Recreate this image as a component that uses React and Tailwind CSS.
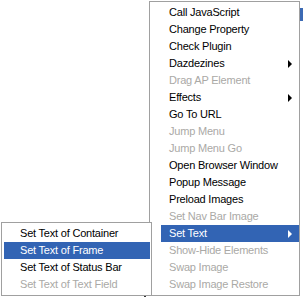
import React from "react";

const mainItems = [
  { label: "Call JavaScript" },
  { label: "Change Property" },
  { label: "Check Plugin" },
  { label: "Dazdezines", sub: true },
  { label: "Drag AP Element", disabled: true },
  { label: "Effects", sub: true },
  { label: "Go To URL" },
  { label: "Jump Menu", disabled: true },
  { label: "Jump Menu Go", disabled: true },
  { label: "Open Browser Window" },
  { label: "Popup Message" },
  { label: "Preload Images" },
  { label: "Set Nav Bar Image", disabled: true },
  { label: "Set Text", sub: true, active: true },
  { label: "Show-Hide Elements", disabled: true },
  { label: "Swap Image", disabled: true },
  { label: "Swap Image Restore", disabled: true },
];

const subItems = [
  { label: "Set Text of Container" },
  { label: "Set Text of Frame", active: true },
  { label: "Set Text of Status Bar" },
  { label: "Set Text of Text Field", disabled: true },
];

function Arrow({ active }) {
  return (
    <span
      className={
        "w-0 h-0 border-y-[4px] border-y-transparent border-l-[4px] " +
        (active ? "border-l-white" : "border-l-black")
      }
    />
  );
}

function Item({ item, indent }) {
  const color = item.active
    ? "bg-[#3264b4] text-white"
    : item.disabled
    ? "text-[#aaa9a6]"
    : "text-black";
  return (
    <div className={`flex h-[17px] items-center justify-between pr-[7px] ${indent} ${color}`}>
      <span className="whitespace-nowrap leading-none tracking-[-0.2px]">{item.label}</span>
      {item.sub && <Arrow active={item.active} />}
    </div>
  );
}

export default function App() {
  return (
    <div
      className="relative w-[303px] h-[297px] bg-white overflow-hidden text-[11px]"
      style={{ fontFamily: '"Liberation Sans", Arial, sans-serif' }}
    >
      {/* bits of the page behind the menus */}
      <div className="absolute left-[300px] top-[8px] w-[3px] h-[13px] bg-[#3c6ab4]" />
      <div className="absolute left-[144px] top-[294px] w-[2px] h-[3px] bg-[#333]" />

      <div className="absolute left-[149px] top-[1px] w-[151px] border border-[#a0a0a0] bg-white pt-[2px] pb-[2px] pl-[11px]">
        {mainItems.map((item) => (
          <Item key={item.label} item={item} indent="pl-[8px]" />
        ))}
      </div>

      <div className="absolute left-[1px] top-[222px] w-[151px] border border-[#a0a0a0] bg-white py-[2px] pl-[2px] pr-[1px]">
        {subItems.map((item) => (
          <Item key={item.label} item={item} indent="pl-[16px]" />
        ))}
      </div>
    </div>
  );
}
